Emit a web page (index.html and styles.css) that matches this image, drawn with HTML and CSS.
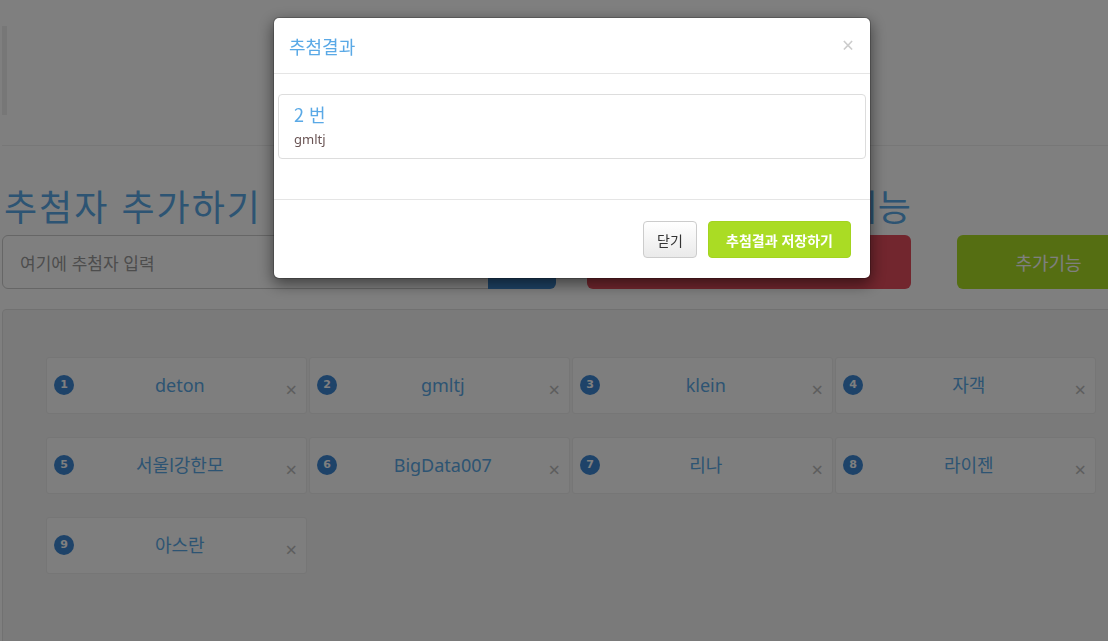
FILE: index.html
```html
<!DOCTYPE html>
<html lang="ko">
<head>
  <meta charset="UTF-8">
  <meta name="viewport" content="width=device-width, initial-scale=1.0">
  <title>추첨기</title>
  <link rel="stylesheet" href="styles.css">
</head>
<body>

  <div class="page">
    <!-- 상단 -->
    <blockquote class="note"></blockquote>
    <hr class="divider">

    <div class="row">
      <div class="col-input">
        <h1>추첨자 추가하기</h1>
      </div>
      <div class="col-side">
        <h1 class="side-title">추첨하기 및 추가기능</h1>
      </div>
    </div>

    <div class="row">
      <div class="col-input input-group">
        <input type="text" placeholder="여기에 추첨자 입력">
        <button class="btn-add">추가</button>
      </div>
      <button class="btn-draw">추첨하기</button>
      <button class="btn-extra">추가기능</button>
    </div>

    <!-- 추첨자 목록 -->
    <div class="well">
      <div class="card-grid">
        <div class="card"><span class="badge">1</span><span class="name">deton</span><span class="del">&times;</span></div>
        <div class="card"><span class="badge">2</span><span class="name">gmltj</span><span class="del">&times;</span></div>
        <div class="card"><span class="badge">3</span><span class="name">klein</span><span class="del">&times;</span></div>
        <div class="card"><span class="badge">4</span><span class="name">자객</span><span class="del">&times;</span></div>
        <div class="card"><span class="badge">5</span><span class="name">서울l강한모</span><span class="del">&times;</span></div>
        <div class="card"><span class="badge">6</span><span class="name">BigData007</span><span class="del">&times;</span></div>
        <div class="card"><span class="badge">7</span><span class="name">리나</span><span class="del">&times;</span></div>
        <div class="card"><span class="badge">8</span><span class="name">라이젠</span><span class="del">&times;</span></div>
        <div class="card"><span class="badge">9</span><span class="name">아스란</span><span class="del">&times;</span></div>
      </div>
    </div>
  </div>

  <!-- 추첨결과 모달 -->
  <div class="backdrop"></div>
  <div class="modal">
    <div class="modal-header">
      <h4>추첨결과</h4>
      <span class="close">&times;</span>
    </div>
    <div class="modal-body">
      <div class="result">
        <div class="result-no">2 번</div>
        <div class="result-name">gmltj</div>
      </div>
    </div>
    <div class="modal-footer">
      <button class="btn-close">닫기</button>
      <button class="btn-save">추첨결과 저장하기</button>
    </div>
  </div>

</body>
</html>
```

FILE: styles.css
```css
body {
  margin: 0;
  background: #fff;
  color: #333;
  font-family: "Noto Sans", "Noto Sans CJK KR", sans-serif;
  font-size: 14px;
  overflow: hidden;
  height: 100vh;
}

.page {
  width: 1138px;
  margin-left: 2px;
}

.note {
  margin: 26px 0 0 0;
  height: 89px;
  border-left: 5px solid #eee;
}

.divider {
  margin: 30px 0 0 0;
  border: 0;
  border-top: 1px solid #eee;
}

.row { display: flex; }

.col-input { width: 554px; }
.col-side { width: 324px; margin-left: 31px; }

h1 {
  margin: 39px 0 0 2px;
  font-family: "Noto Sans CJK KR", sans-serif;
  font-weight: 400;
  font-size: 36px;
  line-height: 40px;
  letter-spacing: 2px;
  color: #5aa9e6;
  white-space: nowrap;
}
.side-title { text-align: right; margin-left: 0; direction: rtl; letter-spacing: 0; }

.input-group { display: flex; margin-top: 10px; height: 54px; }
.input-group input {
  flex: 1;
  box-sizing: border-box;
  height: 54px;
  border: 1px solid #ccc;
  border-radius: 6px 0 0 6px;
  padding: 0 17px;
  font-family: "Noto Sans CJK KR", sans-serif;
  font-size: 17px;
  color: #555;
  outline: none;
}
.input-group input::placeholder { color: #9a9a9a; }

button {
  font-family: "Noto Sans CJK KR", sans-serif;
  cursor: pointer;
}

.btn-add {
  width: 68px;
  margin-left: -2px;
  border: 0;
  border-radius: 0 6px 6px 0;
  background: #3d87cc;
  color: #fff;
  font-size: 17px;
}

.btn-draw, .btn-extra {
  margin-top: 10px;
  height: 54px;
  border: 0;
  border-radius: 6px;
  color: #fff;
  font-size: 18px;
}
.btn-draw { width: 324px; margin-left: 31px; background: #e44c5c; }
.btn-extra { width: 183px; margin-left: 46px; background: #aadc24; }

.well {
  margin-top: 20px;
  height: 400px;
  background: #f5f5f5;
  border: 1px solid #e3e3e3;
  border-radius: 4px;
  padding: 47px 0 0 43px;
}

.card-grid {
  display: grid;
  grid-template-columns: repeat(4, 261px);
  column-gap: 2px;
  row-gap: 23px;
}

.card {
  display: flex;
  align-items: center;
  height: 57px;
  box-sizing: border-box;
  padding: 0 9px 0 7px;
  background: #fcfcfc;
  border: 1px solid #ececec;
  border-radius: 3px;
}

.badge {
  width: 20px;
  height: 20px;
  border-radius: 50%;
  background: #3c86d2;
  color: #fff;
  font-family: "DejaVu Sans", sans-serif;
  font-weight: bold;
  font-size: 11px;
  line-height: 20px;
  text-align: center;
  margin-top: -2px;
}

.name {
  flex: 1;
  text-align: center;
  font-size: 18px;
  line-height: 24px;
  color: #5aa9e6;
  margin-top: -1px;
}

.del {
  font-size: 20px;
  line-height: 20px;
  color: #bbb;
  margin-top: 8px;
}

/* 모달 */
.backdrop {
  position: fixed;
  inset: 0;
  background: rgba(0, 0, 0, 0.5);
}

.modal {
  position: fixed;
  top: 17px;
  left: 273px;
  width: 598px;
  box-sizing: border-box;
  background: #fff;
  border: 1px solid rgba(0, 0, 0, 0.2);
  border-radius: 6px;
  box-shadow: 0 5px 15px rgba(0, 0, 0, 0.5);
  background-clip: padding-box;
}

.modal-header {
  display: flex;
  justify-content: space-between;
  align-items: center;
  height: 55px;
  padding: 0 15px;
  border-bottom: 1px solid #e5e5e5;
}
.modal-header h4 {
  margin: 0;
  font-family: "Noto Sans CJK KR", sans-serif;
  font-weight: 400;
  font-size: 18px;
  color: #5aa9e6;
}
.close {
  font-size: 21px;
  line-height: 21px;
  color: #ccc;
  margin-right: 1px;
}

.modal-body { padding: 20px 4px 40px; }

.result {
  border: 1px solid #ddd;
  border-radius: 4px;
  height: 63px;
  padding: 0 15px;
}
.result-no {
  margin-top: 6px;
  font-family: "Noto Sans CJK KR", sans-serif;
  font-size: 18px;
  line-height: 26px;
  color: #5aa9e6;
}
.result-name {
  margin-top: 2px;
  font-size: 13px;
  line-height: 20px;
  color: #6a5454;
}

.modal-footer {
  display: flex;
  justify-content: flex-end;
  gap: 11px;
  padding: 21px 19px 20px;
  border-top: 1px solid #e5e5e5;
}
.modal-footer button {
  height: 37px;
  border-radius: 4px;
  font-size: 14px;
  padding: 0 12px;
}
.btn-close {
  width: 54px;
  background: linear-gradient(#fff, #eaeaea);
  border: 1px solid #ccc;
  color: #333;
}
.btn-save {
  width: 143px;
  background: #aadc24;
  border: 1px solid #a3d41f;
  color: #fff;
  font-weight: bold;
}
```
